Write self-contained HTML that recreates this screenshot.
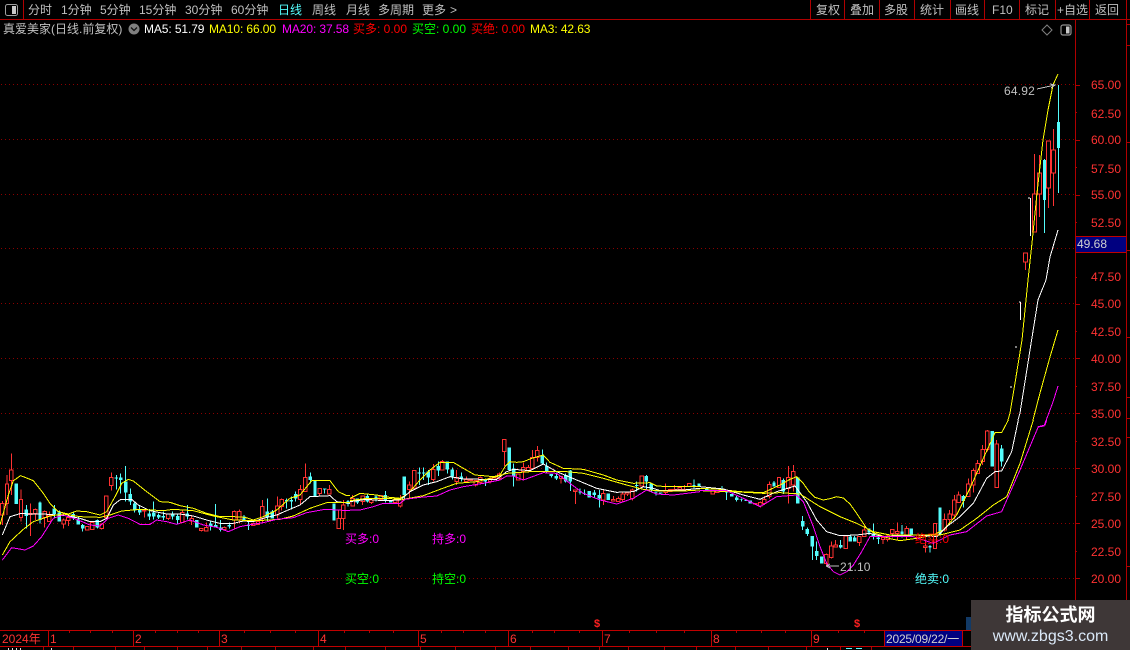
<!DOCTYPE html>
<html><head><meta charset="utf-8"><style>
html,body{margin:0;padding:0;background:#000;width:1130px;height:650px;overflow:hidden}
#w{position:relative;width:1130px;height:650px;background:#000;overflow:hidden;font-family:"Liberation Sans","WenQuanYi Zen Hei","Noto Sans CJK SC",sans-serif;font-size:12px}
#w span{position:absolute;white-space:nowrap;line-height:14px}
svg{position:absolute;left:0;top:0}
path,polyline{vector-effect:non-scaling-stroke;fill:none}
.rw{stroke:#ff3232;stroke-width:1}
.rb{stroke:#ff3232;stroke-width:1;fill:#000}
.cw{stroke:#54fcfc;stroke-width:1}
.cb{stroke:#54fcfc;stroke-width:3.4}
.f{stroke:#ffff00;stroke-width:1}
.s{stroke:#ffff00;stroke-width:1}
.wl{stroke:#fff;stroke-width:1}
.m{stroke:#ff00ff;stroke-width:1}
.t{color:#c0c0c0;top:3px}
.a{color:#ff3232;left:1091px}
.b{color:#ff3232;top:632px}
</style></head><body><div id="w">
<svg width="1130" height="650" viewBox="0 0 1130 650" shape-rendering="crispEdges">
<path stroke="#8c0000" stroke-dasharray="1 3" d="M1 84.5H1075M1 139.5H1075M1 194.5H1075M1 248.5H1075M1 303.5H1075M1 358.5H1075M1 413.5H1075M1 468.5H1075M1 523.5H1075M1 578.5H1075"/>
<g transform="translate(0,440) scale(.33333)">
<path class="rw" d="M7 183V255M21 105V225M34 40V165M63 148V245M91 190V288M106 205V240M134 212V262M148 215V245M191 235V265M205 232V258M262 258V272M277 245V270M305 250V268M319 168V235M334 97V152M433 210V232M505 222V240M547 212V248M575 225V255M604 264V275M619 247V273M673 260V272M703 212V265M718 208V250M760 248V258M774 243V255M787 180V250M832 170V235M845 175V212M901 135V195M916 70V155M959 145V170M988 135V162M1016 210V266M1030 180V270"/>
<path class="rb" d="M2 190h10V225H2zM16 132h10V190H16zM29 90h10V122H29zM58 178h10V233H58zM86 220h10V224H86zM101 208h10V220H101zM129 215h10V233H129zM143 225h10V245H143zM186 240h10V252H186zM200 232h10V242H200zM257 260h10V270H257zM272 248h10V268H272zM300 252h10V265H300zM314 168h10V232H314zM329 113h10V137H329zM428 210h10V213H428zM500 222h10V235H500zM542 218h10V248H542zM570 235h10V243H570zM599 266h10V272H599zM614 262h10V273H614zM668 263h10V268H668zM698 215h10V240H698zM713 215h10V240H713zM755 250h10V256H755zM769 245h10V253H769zM782 200h10V235H782zM827 198h10V225H827zM840 178h10V200H840zM896 148h10V178H896zM911 112h10V155H911zM954 145h10V160H954zM983 148h10V162H983zM1011 235h10V266H1011zM1025 195h10V236H1025z"/>
<path class="cw" d="M79 195V265M120 185V250M163 195V235M178 212V245M220 215V240M235 228V254M248 252V275M292 238V265M349 105V148M362 100V160M377 78V185M391 145V195M404 185V218M419 198V225M448 207V240M461 185V238M476 220V237M490 215V240M518 215V238M533 222V252M562 195V238M632 245V272M647 192V262M662 240V275M688 248V265M732 225V245M745 245V270M802 176V245M817 210V235M860 175V205M874 170V208M887 155V185M931 97V130M974 145V160M1044 180V200"/>
<path class="cb" d="M49 130V192M79 208V228M120 188V240M163 205V222M178 218V245M220 222V235M235 238V254M248 255V265M292 240V262M349 113V116M362 113V120M377 125V158M391 162V185M404 190V212M419 208V218M448 220V230M461 218V230M476 225V232M490 228V232M518 220V230M533 228V240M562 220V230M590 240V263M632 250V258M647 255V262M662 262V270M688 255V260M732 230V240M745 255V258M802 215V232M817 215V235M860 180V185M874 180V185M887 162V175M931 110V120M945 122V168M974 145V148M1002 190V242M1044 183V192"/>
</g>
<g transform="translate(350,430) scale(.33333)">
<path class="rw" d="M8 195V228M38 198V225M64 210V222M92 195V212M136 210V218M151 195V232M178 155V205M193 120V180M250 102V155M277 90V120M320 120V165M349 140V158M362 150V152M377 152V170M391 140V162M420 140V160M433 143V147M448 128V150M463 28V108M505 132V150M520 98V148M535 105V125M547 60V120M562 48V95M633 140V160M676 180V222M760 180V225M790 198V213M805 200V215M818 185V215M832 188V198M847 175V212M875 138V170M947 160V192M961 178V185M974 165V180M989 172V178M1003 165V182M1018 160V170"/>
<path class="rb" d="M3 205h10V228H3zM33 198h10V215H33zM59 210h10V218H59zM87 197h10V208H87zM131 210h10V218H131zM146 207h10V228H146zM173 165h10V178H173zM188 122h10V175H188zM245 118h10V148H245zM272 95h10V120H272zM315 142h10V155H315zM344 148h10V155H344zM357 150h10V152H357zM372 152h10V165H372zM386 143h10V158H386zM415 145h10V155H415zM428 143h10V147H428zM443 132h10V145H443zM458 28h10V65H458zM500 132h10V150H500zM515 112h10V125H515zM530 112h10V122H530zM542 82h10V115H542zM557 62h10V82H557zM628 140h10V145H628zM671 180h10V185H671zM755 190h10V210H755zM785 208h10V213H785zM800 205h10V215H800zM813 192h10V208H813zM827 188h10V192H827zM842 180h10V205H842zM870 138h10V168H870zM942 182h10V188H942zM956 178h10V185H956zM969 178h10V180H969zM984 172h10V178H984zM998 178h10V182H998zM1013 160h10V170H1013z"/>
<path class="cw" d="M22 205V222M52 190V218M78 195V215M106 183V218M163 140V212M208 113V165M221 113V150M235 120V165M265 95V138M292 95V130M307 112V148M334 128V155M406 145V168M478 52V120M491 100V170M577 58V105M590 98V130M604 132V142M619 128V150M647 130V158M661 120V183M690 175V193M703 178V195M733 180V202M748 180V233M860 155V185M889 135V180M904 160V188M918 185V197M1032 148V175"/>
<path class="cb" d="M22 205V218M52 198V215M78 200V207M106 195V210M122 210V218M163 140V195M208 128V130M221 128V130M235 125V143M265 108V122M292 95V118M307 118V140M334 140V147M406 148V155M478 52V120M491 115V138M577 75V100M590 108V125M604 132V138M619 138V145M647 135V155M661 122V155M690 185V187M703 190V192M718 183V202M733 188V195M748 195V205M775 190V210M860 165V168M889 138V155M904 160V180M918 185V188M932 188V190M1032 165V170M1047 160V170"/>
</g>
<g transform="translate(700,420) scale(.33333)">
<path class="rw" d="M38 212V222M52 212V218M166 250V252M181 245V262M193 228V255M208 185V235M237 172V202M265 138V250M280 135V215M379 400V440M394 365V415M407 360V381M437 345V385M478 348V378M493 315V350M549 352V372M563 345V365M577 328V352M592 308V360M620 318V360M676 360V398M705 310V385M734 280V335M749 270V310M763 225V298M776 215V248M805 175V230M820 145V218M833 120V160M848 75V135M862 30V95M890 60V203"/>
<path class="rb" d="M33 212h10V222H33zM47 212h10V218H47zM161 250h10V252H161zM176 248h10V258H176zM188 238h10V250H188zM203 193h10V230H203zM232 172h10V202H232zM260 172h10V205H260zM275 155h10V195H275zM374 403h10V430H374zM389 378h10V412H389zM402 375h10V381H402zM432 348h10V385H432zM473 350h10V368H473zM488 330h10V350H488zM544 352h10V358H544zM558 348h10V358H558zM572 328h10V340H572zM587 335h10V340H587zM615 325h10V345H615zM671 378h10V383H671zM700 310h10V385H700zM729 298h10V330H729zM744 282h10V298H744zM758 240h10V285H758zM771 225h10V248H771zM800 192h10V230H800zM815 152h10V195H815zM828 130h10V160H828zM843 88h10V125H843zM857 33h10V88H857zM885 72h10V203H885z"/>
<path class="cw" d="M20 205V215M66 198V210M80 208V240M95 222V230M110 228V245M124 235V245M222 183V200M250 175V222M308 288V330M322 322V348M337 348V420M350 365V420M422 360V385M451 345V365M464 348V365M507 325V345M520 310V358M535 345V372M606 315V352M690 375V398M790 225V262M905 75V140"/>
<path class="cb" d="M20 205V215M66 205V210M80 212V217M95 222V230M110 232V240M124 238V240M138 240V243M151 242V250M222 188V200M250 180V215M293 172V250M308 303V320M322 327V342M337 348V380M350 393V408M365 410V430M422 375V382M451 350V365M464 353V365M507 325V338M520 340V350M535 352V357M606 335V342M634 325V345M690 378V382M720 262V345M790 228V243M877 33V140M905 85V125"/>
</g>
<path class="rw" d="M1025.5 262V270M1034.5 154V194M1039.5 155V217M1048.5 141V208M1053.5 129V206"/>
<path class="rb" d="M1023.5 253h4V262h-4zM1032.5 194h4V232h-4zM1037.5 173h4V194h-4zM1046.5 141h4V188h-4zM1051.5 150h4V173h-4z"/>
<path class="cw" d="M1044.5 159V233M1058.5 85V193"/>
<path class="cb" d="M1044.5 160V200M1058.5 122V148"/>
<path stroke="#fff" d="M1030.5 198V236M1028 198h2M1020.5 302V320M1019 302h1.5M1015 347h2M1010 387h2"/>
<g transform="translate(0,440) scale(.33333)">
<polyline class="f" points="0,255 25,165 40,122 62,107 100,122 130,160 150,190 175,215 205,222 230,213 260,215 300,225 320,215 345,170 365,130 385,118 400,123 440,155 480,185 510,187 540,197 580,205 620,220 660,230 700,230 735,232 760,240 790,230 830,210 870,175 900,165 935,122 990,122 1015,155 1040,167 1050,167"/>
<polyline class="wl" points="7,285 30,230 60,221 130,222 170,225 205,228 240,235 270,245 300,245 320,235 340,195 362,178 395,178 415,195 450,212 500,222 540,222 580,228 620,240 660,250 700,250 730,243 760,245 790,235 830,225 860,212 900,195 930,170 990,167 1010,185 1050,190"/>
<polyline class="s" points="7,345 30,305 70,268 100,245 150,228 190,222 240,230 300,232 330,225 365,213 420,208 490,212 520,208 580,212 640,228 700,240 770,242 840,238 880,228 930,205 980,188 1050,188"/>
<polyline class="m" points="7,360 35,323 75,330 100,318 125,290 160,235 190,225 230,238 270,255 300,258 325,235 355,225 385,235 420,253 450,253 470,240 500,245 530,253 570,240 610,255 650,262 685,275 720,260 745,255 790,248 830,238 880,233 920,218 975,208 1010,210 1050,212"/>
</g>
<g transform="translate(350,430) scale(.33333)">
<polyline class="f" points="0,205 30,190 80,195 100,200 150,205 175,190 210,150 240,120 270,97 310,97 340,115 375,135 400,137 430,140 450,135 465,110 480,95 500,97 520,95 545,85 580,75 600,97 640,115 700,118 760,135 800,150 850,160 900,158 920,168 960,170 1050,170"/>
<polyline class="wl" points="0,215 50,208 100,212 150,210 180,185 220,165 260,155 300,140 340,147 400,148 440,148 470,125 490,118 540,122 580,102 620,125 680,150 740,175 800,187 850,185 880,170 910,175 930,182 1000,180 1050,175"/>
<polyline class="s" points="0,212 50,205 100,205 160,208 220,197 270,178 320,160 380,155 440,140 470,130 540,125 650,125 700,130 760,145 830,165 880,178 930,183 1000,183 1050,180"/>
<polyline class="m" points="0,240 30,240 70,230 100,220 150,220 165,208 210,202 260,198 300,180 340,170 400,160 450,150 470,138 490,138 520,150 580,128 620,130 660,160 700,190 750,210 800,222 850,205 890,180 920,192 970,195 1050,185"/>
</g>
<g transform="translate(700,420) scale(.33333)">
<polyline class="f" points="0,205 60,208 120,215 190,218 240,195 270,178 290,170 310,190 325,212 345,232 370,240 390,236 410,230 430,234 450,252 470,280 500,325 520,338 540,345 570,356 600,362 650,355 700,345 730,330 770,285 810,205 850,115 885,38 905,38 925,0"/>
<polyline class="wl" points="0,200 70,207 130,225 180,238 230,215 285,198 320,245 350,300 380,335 420,347 470,345 510,340 550,350 650,345 710,350 740,320 780,290 820,250 860,175 885,155 905,153 935,95 955,0"/>
<polyline class="s" points="0,212 100,215 190,220 240,218 300,222 360,260 420,290 470,310 520,335 570,345 630,345 720,345 780,330 830,295 880,255 920,230 960,130 1000,0"/>
<polyline class="m" points="0,212 80,212 130,235 180,260 230,230 290,225 310,245 340,320 360,380 380,430 400,455 420,465 440,455 460,435 485,395 510,350 570,350 640,350 700,370 750,345 800,335 860,288 905,275 960,150 1015,20 1035,15 1040,0"/>
</g>
<polyline class="f" points="1008,420 1010,413 1015,383 1022,340 1028,280 1032,243 1037,193 1043,140 1048,110 1053,85 1058,74"/>
<polyline class="wl" points="1018,420 1020,413 1030,350 1038,300 1046,280 1050,257 1058,230"/>
<polyline class="s" points="1033,420 1040,393 1050,357 1058,330"/>
<polyline class="m" points="1038,427 1044,426 1053,402 1058,386"/>
<path stroke="#c0c0c0" d="M1037 89L1055 85M1050 84l5 1-4 3M826 566h13M826 566l4-2M826 566l4 2"/>
<g stroke="#b00000" fill="none">
<path d="M0 19.5H1130M23.5 0V19M810.5 0V19M844.5 0V19M879.5 0V19M914.5 0V19M950.5 0V19M984.5 0V19M1019.5 0V19M1055.5 0V19M1089.5 0V19M1126.5 0V630M1075.5 20V630"/>
<path d="M1075 85.5h5M1075 112.5h2M1075 140.5h5M1075 167.5h2M1075 195.5h5M1075 222.5h2M1075 249.5h5M1075 277.5h2M1075 304.5h5M1075 331.5h2M1075 358.5h5M1075 386.5h2M1075 413.5h5M1075 441.5h2M1075 468.5h5M1075 496.5h2M1075 523.5h5M1075 551.5h2M1075 578.5h5M1075 606.5h2"/>
<path d="M1126 24.5h4M1126 45.5h4M1126 142.5h4M1126 250.5h4M1126 337.5h4M1126 397.5h4M1126 418.5h4M1126 437.5h4M1126 566.5h4"/>
<path stroke="#c00000" d="M0 630.5H972M0 646.5H972M48.5 630V646M133.5 630V646M219.5 630V646M318.5 630V646M418.5 630V646M508.5 630V646M602.5 630V646M711.5 630V646M811.5 630V646M884.5 630V646M962.5 630V646"/>
<path d="M69.5 631v2M90.5 631v2M112.5 631v2M155.5 631v2M177.5 631v2M198.5 631v2M244.5 631v2M270.5 631v2M295.5 631v2M344.5 631v2M369.5 631v2M393.5 631v2M441.5 631v2M463.5 631v2M485.5 631v2M532.5 631v2M554.5 631v2M579.5 631v2M629.5 631v2M656.5 631v2M684.5 631v2M736.5 631v2M761.5 631v2M785.5 631v2M838.5 631v2M864.5 631v2"/>
<path d="M43.5 647v3M73.5 647v3M115.5 647v3M144.5 647v3M177.5 647v3M207.5 647v3M241.5 647v3M275.5 647v3M313.5 647v3M345.5 647v3M385.5 647v3M420.5 647v3M455.5 647v3M495.5 647v3M530.5 647v3M568.5 647v3M599.5 647v3M628.5 647v3M664.5 647v3M696.5 647v3M735.5 647v3M768.5 647v3M806.5 647v3M840.5 647v3M871.5 647v3"/>
</g>
<path stroke="#e0e0e0" d="M8.5 648v2M12.5 648v2M16.5 648v2M20.5 648v2M51.5 648v2M827.5 648v2"/>
<path stroke="#54fcfc" d="M846 648.5h6M856 648.5h6"/>
<rect x="885" y="631" width="77" height="15" fill="#000080"/>
<rect x="966" y="617" width="6" height="13" fill="#123a66"/>
<path fill="#ff2020" d="M598 618l3 4h-6z"/>
<path fill="#ff2020" d="M858 618l3 4h-6z"/>
</svg>
<svg width="1130" height="40" viewBox="0 0 1130 40">
<rect x="5.5" y="4.5" width="12" height="11" rx="2" fill="none" stroke="#a0a0a0"/><rect x="12" y="6" width="4" height="8" fill="#c8c8c8"/>
<rect x="1061" y="25" width="10" height="10" rx="2" fill="none" stroke="#909090" stroke-width="1.2"/><rect x="1066" y="26.5" width="3.5" height="7" fill="#c8c8c8"/>
<path d="M1047 25l5 5-5 5-5-5z" fill="none" stroke="#808080"/>
<circle cx="134" cy="29" r="5.5" fill="#808080"/><path d="M131 27.5l3 3 3-3" fill="none" stroke="#111" stroke-width="1.3"/>
</svg>
<span class="t" style="left:28px">分时</span><span class="t" style="left:61px">1分钟</span><span class="t" style="left:100px">5分钟</span><span class="t" style="left:139px">15分钟</span><span class="t" style="left:185px">30分钟</span><span class="t" style="left:231px">60分钟</span><span class="t" style="left:278px;color:#54fcfc">日线</span><span class="t" style="left:312px">周线</span><span class="t" style="left:346px">月线</span><span class="t" style="left:378px">多周期</span><span class="t" style="left:422px">更多</span><span class="t" style="left:450px">&gt;</span>
<span class="t" style="left:816px">复权</span><span class="t" style="left:850px">叠加</span><span class="t" style="left:884px">多股</span><span class="t" style="left:920px">统计</span><span class="t" style="left:955px">画线</span><span class="t" style="left:992px">F10</span><span class="t" style="left:1025px">标记</span><span class="t" style="left:1057px">+自选</span><span class="t" style="left:1095px">返回</span>
<span style="left:3px;top:22px;color:#c0c0c0">真爱美家(日线.前复权)</span>
<span style="left:144px;top:22px;color:#fff;letter-spacing:-.1px">MA5: 51.79</span>
<span style="left:209px;top:22px;color:#ff0;letter-spacing:-.1px">MA10: 66.00</span>
<span style="left:282px;top:22px;color:#f0f;letter-spacing:-.1px">MA20: 37.58</span>
<span style="left:353px;top:22px;color:#f00">买多: 0.00</span>
<span style="left:412px;top:22px;color:#0f0">买空: 0.00</span>
<span style="left:471px;top:22px;color:#f00">买绝: 0.00</span>
<span style="left:530px;top:22px;color:#ff0;letter-spacing:-.1px">MA3: 42.63</span>
<span class="a" style="top:78px">65.00</span><span class="a" style="top:107px">62.50</span><span class="a" style="top:133px">60.00</span><span class="a" style="top:162px">57.50</span><span class="a" style="top:188px">55.00</span><span class="a" style="top:216px">52.50</span><span class="a" style="top:270px">47.50</span><span class="a" style="top:297px">45.00</span><span class="a" style="top:325px">42.50</span><span class="a" style="top:352px">40.00</span><span class="a" style="top:380px">37.50</span><span class="a" style="top:407px">35.00</span><span class="a" style="top:435px">32.50</span><span class="a" style="top:462px">30.00</span><span class="a" style="top:490px">27.50</span><span class="a" style="top:517px">25.00</span><span class="a" style="top:545px">22.50</span><span class="a" style="top:572px">20.00</span>
<div style="position:absolute;left:1076px;top:236px;width:50px;height:15px;background:#000080;border-top:1px solid #c00000;border-bottom:1px solid #c00000"></div>
<span style="left:1077px;top:237px;color:#d0d0d0">49.68</span>
<span style="left:1004px;top:84px;color:#c0c0c0;letter-spacing:.2px">64.92</span>
<span style="left:840px;top:560px;color:#c0c0c0;letter-spacing:.1px">21.10</span>
<span style="left:345px;top:532px;color:#f0f">买多:0</span><span style="left:432px;top:532px;color:#f0f">持多:0</span>
<span style="left:345px;top:572px;color:#0f0">买空:0</span><span style="left:432px;top:572px;color:#0f0">持空:0</span>
<span style="left:915px;top:532px;color:#f00">绝买:0</span><span style="left:915px;top:572px;color:#54fcfc">绝卖:0</span>
<span style="left:594px;top:617px;color:#ff2020;font-weight:bold;font-size:11px">$</span><span style="left:854px;top:617px;color:#ff2020;font-weight:bold;font-size:11px">$</span>
<span class="b" style="left:2px">2024年</span><span class="b" style="left:50px">1</span><span class="b" style="left:135px">2</span><span class="b" style="left:221px">3</span><span class="b" style="left:320px">4</span><span class="b" style="left:420px">5</span><span class="b" style="left:510px">6</span><span class="b" style="left:604px">7</span><span class="b" style="left:713px">8</span><span class="b" style="left:813px">9</span>
<span style="left:886px;top:632px;color:#d0d0d0;letter-spacing:-.2px">2025/09/22/一</span>
<div style="position:absolute;left:971px;top:600px;width:159px;height:50px;background:#3e3737"></div>
<span style="left:971px;width:159px;text-align:center;top:606px;color:#fff;font-weight:bold;font-size:18px;line-height:19px">指标公式网</span>
<span style="left:971px;width:159px;text-align:center;top:628px;color:#dbe9f8;font-size:16px;line-height:17px">www.zbgs3.com</span>
</div></body></html>
